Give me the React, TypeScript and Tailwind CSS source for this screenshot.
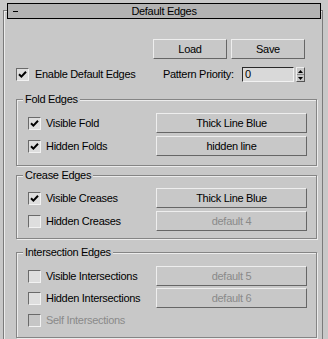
import type { ReactNode } from 'react'

function Check({ checked, disabled }: { checked?: boolean; disabled?: boolean }) {
  return (
    <span
      className={`flex h-[13px] w-[13px] shrink-0 items-center justify-center border border-t-[#6a6a6a] border-l-[#6a6a6a] border-r-[#f2f2f2] border-b-[#f2f2f2] ${
        disabled ? 'bg-[#c6c6c6]' : 'bg-[#dedede]'
      }`}
    >
      {checked && (
        <svg width="9" height="9" viewBox="0 0 9 9">
          <path d="M1 4.2 L3.4 6.6 L8 1.8" fill="none" stroke="#000" strokeWidth="2" />
        </svg>
      )}
    </span>
  )
}

function Btn({ children, disabled, className = '' }: { children: ReactNode; disabled?: boolean; className?: string }) {
  return (
    <div
      className={`flex h-[20px] items-center justify-center border border-t-[#eeeeee] border-l-[#eeeeee] border-r-[#666666] border-b-[#666666] ${
        disabled ? 'text-[#8a8a8a]' : 'text-black'
      } ${className}`}
    >
      {children}
    </div>
  )
}

function Row({
  label,
  checked,
  disabled,
  button,
  buttonDisabled,
}: {
  label: string
  checked?: boolean
  disabled?: boolean
  button?: string
  buttonDisabled?: boolean
}) {
  return (
    <div className="flex h-[20px] items-center">
      <div className="flex flex-1 items-center gap-[5px]">
        <Check checked={checked} disabled={disabled} />
        <span className={disabled ? 'text-[#8a8a8a]' : 'text-black'}>{label}</span>
      </div>
      {button && (
        <Btn disabled={buttonDisabled} className="w-[151px]">
          {button}
        </Btn>
      )}
    </div>
  )
}

function Group({ title, className = '', children }: { title: string; className?: string; children: ReactNode }) {
  return (
    <div
      className={`relative ml-[12px] w-[301px] border border-[#858585] shadow-[1px_1px_0_#ececec,inset_1px_1px_0_#ececec] pl-[11px] pr-[9px] ${className}`}
    >
      <span className="absolute -top-[8px] left-[6px] bg-[#c8c8c8] px-[2px] leading-[14px]">{title}</span>
      {children}
    </div>
  )
}

export default function App() {
  return (
    <div
      className="relative h-[339px] w-[328px] overflow-hidden bg-[#c8c8c8] text-[11px] tracking-[-0.3px] text-black"
      style={{ fontFamily: '"Liberation Sans", Arial, sans-serif' }}
    >
      {/* rollout frame */}
      <div className="ml-[3px] mt-[10px] h-[329px] w-[320px] border-l border-t border-r border-[#7b7b7b] shadow-[inset_1px_1px_0_#ececec]">
        <div className="mt-[28px] flex justify-end gap-[4px] pr-[17px]">
          <Btn className="w-[74px]">Load</Btn>
          <Btn className="w-[74px]">Save</Btn>
        </div>

        <div className="mt-[8px] flex h-[15px] items-center pl-[12px]">
          <div className="flex w-[147px] items-center gap-[6px]">
            <Check checked />
            <span>Enable Default Edges</span>
          </div>
          <span className="w-[79px]">Pattern Priority:</span>
          <div className="flex h-[15px] w-[52px] items-center border border-t-[#2a2a2a] border-l-[#2a2a2a] border-r-[#f2f2f2] border-b-[#f2f2f2] bg-[#d9d9d9] pl-[2px]">
            0
          </div>
          <div className="ml-[2px] flex h-[15px] w-[9px] flex-col border border-t-[#eeeeee] border-l-[#eeeeee] border-r-[#555] border-b-[#555]">
            <div className="flex flex-1 items-center justify-center border-b border-[#888]">
              <svg width="5" height="3" viewBox="0 0 5 3">
                <path d="M2.5 0 L5 3 L0 3 Z" fill="#000" />
              </svg>
            </div>
            <div className="flex flex-1 items-center justify-center">
              <svg width="5" height="3" viewBox="0 0 5 3">
                <path d="M0 0 L5 0 L2.5 3 Z" fill="#000" />
              </svg>
            </div>
          </div>
        </div>

        <Group title="Fold Edges" className="mt-[17px] pt-[13px] pb-[9px]">
          <div className="flex flex-col gap-[3px]">
            <Row label="Visible Fold" checked button="Thick Line Blue" />
            <Row label="Hidden Folds" checked button="hidden line" />
          </div>
        </Group>

        <Group title="Crease Edges" className="mt-[9px] pt-[12px] pb-[7px]">
          <div className="flex flex-col gap-[3px]">
            <Row label="Visible Creases" checked button="Thick Line Blue" />
            <Row label="Hidden Creases" button="default 4" buttonDisabled />
          </div>
        </Group>

        <Group title="Intersection Edges" className="mt-[13px] pt-[13px] pb-[9px]">
          <div className="flex flex-col gap-[2px]">
            <Row label="Visible Intersections" button="default 5" buttonDisabled />
            <Row label="Hidden Intersections" button="default 6" buttonDisabled />
            <div className="mt-[2px] flex h-[16px] items-center gap-[5px]">
              <Check disabled />
              <span className="text-[#8a8a8a]">Self Intersections</span>
            </div>
          </div>
        </Group>
      </div>

      {/* rollout title bar, sits over the frame's top line */}
      <div className="absolute left-[7px] top-[3px] grid h-[16px] w-[314px] grid-cols-[20px_1fr_20px] items-center border border-black bg-[#b3b3b3]">
        <span className="pl-[5px] leading-none">
          <span className="block h-[1px] w-[5px] bg-black" />
        </span>
        <span className="text-center leading-none">Default Edges</span>
        <span />
      </div>
    </div>
  )
}
